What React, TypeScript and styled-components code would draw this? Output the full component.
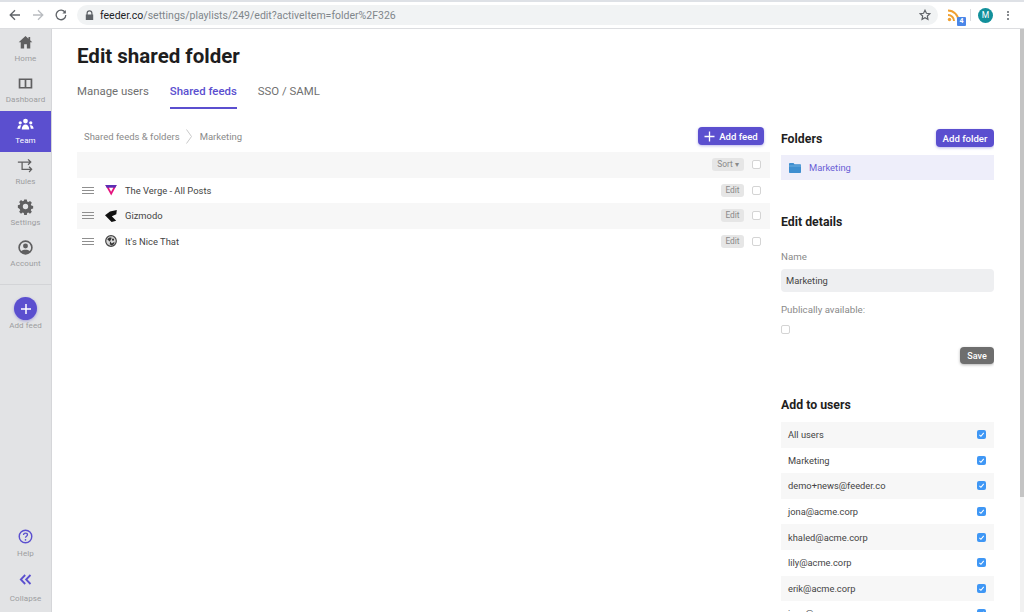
import React from "react";
import styled, { createGlobalStyle } from "styled-components";

const Global = createGlobalStyle`
  html, body { margin: 0; padding: 0; height: 100%; overflow: hidden; background: #fff; }
  #root { height: 100%; }
  * { box-sizing: border-box; }
`;

const FONT = `"Roboto", "Noto Sans", sans-serif`;
const PURPLE = "#5b4fcf";

const Page = styled.div`
  width: 1024px; height: 612px; display: flex; flex-direction: column; overflow: hidden;
  font-family: ${FONT}; color: #333;
`;
const TabStrip = styled.div`
  height: 2px; flex: none; background: #dee1e6;
`;
const Toolbar = styled.div`
  height: 27px; flex: none; display: flex; align-items: center; background: #fff;
  border-bottom: 1px solid #dcdde0; padding: 0 0 0 9px;
`;
const NavIcons = styled.div`
  display: flex; align-items: center; gap: 11px; width: 68px; flex: none;
`;
const AddressBar = styled.div`
  width: 861px; height: 20px; flex: none; border-radius: 10px; background: #f1f3f4;
  display: flex; align-items: center; padding: 0 7px 0 8px; font: 10.5px "Roboto", sans-serif; color: #80868b;
  svg { flex: none; }
`;
const Url = styled.span`
  margin-left: 6px; flex: 1; white-space: nowrap;
  b { font-weight: 400; color: #202124; }
`;
const ExtArea = styled.div`
  display: flex; align-items: center; flex: 1; padding-left: 9px;
`;
const RssWrap = styled.div`
  position: relative; width: 14px; height: 16px; margin-top: -1px;
`;
const RssBadge = styled.span`
  position: absolute; right: -5px; bottom: -3px; width: 9px; height: 9px; background: #4a86e8; color: #fff;
  font: 700 7px/9px "Roboto", sans-serif; text-align: center; border-radius: 1px;
`;
const Sep = styled.span`
  width: 1px; height: 12px; background: #dadce0; margin-left: 9px;
`;
const Avatar = styled.span`
  width: 15px; height: 15px; border-radius: 50%; background: #12909b; color: #fff; margin-left: 7px;
  font: 400 8.5px/15px "Roboto", sans-serif; text-align: center;
`;
const Dots = styled.span`
  margin-left: 14px; display: flex; flex-direction: column; gap: 1.5px;
  i { width: 2px; height: 2px; border-radius: 50%; background: #5f6368; display: block; }
`;

const Body = styled.div`
  flex: 1; min-height: 0; display: flex;
`;
const Sidebar = styled.nav`
  width: 52px; flex: none; background: #e2e3e5; border-right: 1px solid #d5d6d9; display: flex; flex-direction: column;
  padding-bottom: 7px;
`;
const NavItem = styled.div<{ $active?: boolean }>`
  height: 41px; flex: none; display: flex; flex-direction: column; align-items: center; justify-content: flex-start;
  padding-top: 5px; gap: 2px;
  background: ${(p) => (p.$active ? PURPLE : "transparent")};
  color: ${(p) => (p.$active ? "#fff" : "#5f5f60")};
  svg { display: block; flex: none; }
`;
const NavLabel = styled.span<{ $active?: boolean }>`
  font-size: 8px; line-height: 12px; white-space: nowrap;
  color: ${(p) => (p.$active ? "#fff" : "#9c9d9f")}; letter-spacing: 0.1px;
`;
const Divider = styled.div`
  height: 1px; background: #d3d4d7; margin-top: 9px; flex: none;
`;
const AddFeedNav = styled.div`
  display: flex; flex-direction: column; align-items: center; padding-top: 12px;
`;
const AddCircle = styled.span`
  width: 23px; height: 23px; border-radius: 50%; background: ${PURPLE}; display: flex; align-items: center; justify-content: center;
  box-shadow: 0 1px 3px rgba(91,79,207,0.45);
`;
const Spacer = styled.div`flex: 1;`;
const BottomItem = styled.div<{ $gap: number }>`
  display: flex; flex-direction: column; align-items: center; gap: ${(p) => p.$gap}px;
  svg { display: block; flex: none; }
`;
const BottomGroup = styled.div`
  display: flex; flex-direction: column; gap: 13px;
`;

const Main = styled.main`
  flex: 1; min-width: 0; padding: 15px 0 0 25px; background: #fff; height: 100%; overflow: hidden;
`;
const Title = styled.h1`
  margin: 0; font-size: 20.5px; line-height: 24px; font-weight: 700; color: #1e1e1e;
`;
const Tabs = styled.div`
  display: flex; gap: 21px; margin-top: 4px; height: 37px;
`;
const Tab = styled.div<{ $active?: boolean }>`
  font-size: 11.4px; line-height: 18px; padding-top: 10px; height: 37px; font-weight: ${(p) => (p.$active ? 500 : 400)};
  color: ${(p) => (p.$active ? PURPLE : "#6f6f6f")};
  border-bottom: ${(p) => (p.$active ? `2px solid ${PURPLE}` : "2px solid transparent")};
`;
const Columns = styled.div`
  display: flex; margin-top: 18px; align-items: flex-start;
`;
const LeftCol = styled.section`
  width: 693px; flex: none;
`;
const RightCol = styled.aside`
  width: 213px; flex: none; margin-left: 11px;
`;
const CrumbRow = styled.div`
  height: 25px; display: flex; align-items: center; padding: 0 6px 7px 7px; justify-content: space-between;
`;
const Crumbs = styled.div`
  display: flex; align-items: center; font-size: 9.5px; color: #8a8a8a;
  svg { margin: 0 8px 0 6px; }
`;
const PrimaryBtn = styled.button<{ $w: number }>`
  border: 0; background: ${PURPLE}; color: #fff; font: 500 9.6px ${FONT}; border-radius: 4px; height: 18px; padding: 0;
  width: ${(p) => p.$w}px; justify-content: center;
  display: flex; align-items: center; gap: 4px; box-shadow: 0 1px 3px rgba(91,79,207,0.4); white-space: nowrap;
`;
const Row = styled.div<{ $shade?: boolean }>`
  height: 25.5px; display: flex; align-items: center; background: ${(p) => (p.$shade ? "#f7f7f7" : "#fff")};
  padding: 0 9px 0 5px; font-size: 9.4px; color: #444;
`;
const Drag = styled.span`
  width: 12px; display: flex; flex-direction: column; gap: 2px; flex: none;
  i { display: block; height: 1px; background: #8f8f8f; }
`;
const Logo = styled.span`
  width: 12px; height: 12px; margin: 0 8px 0 11px; flex: none; display: block;
  svg { display: block; }
`;
const RowName = styled.span`flex: 1; white-space: nowrap;`;
const SmallBtn = styled.span<{ $wide?: boolean }>`
  background: #e6e6e6; color: #8a8a8a; border-radius: 3px; height: 13px; font-size: 8.4px; line-height: 13px;
  width: ${(p) => (p.$wide ? "32px" : "23px")}; text-align: center; flex: none; white-space: nowrap;
`;
const Check = styled.span<{ $on?: boolean }>`
  width: 9px; height: 9px; border-radius: 2px; flex: none; display: flex; align-items: center; justify-content: center;
  background: ${(p) => (p.$on ? "#3f97f5" : "#fff")};
  border: ${(p) => (p.$on ? "0" : "1px solid #d4d4d4")};
`;
const CheckSlot = styled.span`
  margin-left: 8px; display: flex; flex: none;
`;
const PublicCheck = styled.div`
  margin-top: 8px; display: flex;
`;
const Heading = styled.h2<{ $mt?: number; $mb?: number }>`
  margin: ${(p) => p.$mt ?? 0}px 0 ${(p) => p.$mb ?? 0}px; font-size: 12.3px; line-height: 18px; font-weight: 700; color: #1f1f1f;
`;
const HeadRow = styled.div`
  height: 28px; display: flex; align-items: center; justify-content: space-between; padding: 2px 0 8px;
`;
const FolderRow = styled.div`
  height: 25px; background: #eeeefa; display: flex; align-items: center; padding-left: 8px; gap: 8px;
  font-size: 9.4px; color: #6a5fd6;
`;
const FieldLabel = styled.div<{ $mt: number }>`
  font-size: 9.7px; line-height: 14px; color: #8a8a8a; margin-top: ${(p) => p.$mt}px;
`;
const Input = styled.div`
  height: 23px; border-radius: 4px; background: #eeeff1; font-size: 9.4px; line-height: 23px; padding-left: 5px; color: #444; margin-top: 5px;
`;
const SaveRow = styled.div`
  display: flex; justify-content: flex-end; margin-top: 13px;
`;
const SaveBtn = styled.button`
  border: 0; width: 34px; height: 17px; background: #6e6e6e; color: #fff; font: 500 9px ${FONT}; padding: 0; border-radius: 4px;
  box-shadow: 0 1px 3px rgba(0,0,0,0.3);
`;
const UserRow = styled.div<{ $shade?: boolean }>`
  height: 25.6px; display: flex; align-items: center; justify-content: space-between; padding: 0 8px 0 7px;
  background: ${(p) => (p.$shade ? "#f7f7f7" : "#fff")}; font-size: 9.3px; color: #444; flex: none;
`;
const Scrollbar = styled.div`
  width: 4px; flex: none; background: #f1f1f1; margin-left: 26px; height: 100%;
`;
const Thumb = styled.div`
  height: 468px; background: #c4c4c4;
`;

const Tick = () => (
  <svg width="7" height="7" viewBox="0 0 10 10" fill="none" stroke="#fff" strokeWidth="1.5"><path d="M2 5.4l2.2 2.2L8.2 2.6" /></svg>
);

const NAV = [
  { label: "Home", icon: <path d="M10 2.4 2 9.6h2.4V17h4v-5h3.2v5h4V9.6H18l-2.5-2.3V3.5h-2v2z" fill="currentColor" /> },
  { label: "Dashboard", icon: <path fillRule="evenodd" d="M2 4h16v12H2zM4 6v8h5V6zm7 0v8h5V6z" fill="currentColor" /> },
];
const NAV2 = [
  { label: "Rules", icon: <g fill="none" stroke="currentColor" strokeWidth="1.5"><path d="M1 6h14.5M13 2.8 16.2 6 13 9.2M6 6v8.500h11M14.200 11.400l3 3.100-3 3.100" /></g> },
  { label: "Settings", icon: <path fillRule="evenodd" fill="currentColor" d="m8.3 1.5h3.4l.5 2.5 1.5.7 2.2-1.4 2.4 2.4-1.4 2.2.7 1.5 2.4.5v3.4l-2.4.5-.7 1.5 1.4 2.2-2.4 2.4-2.2-1.4-1.500.7-.5 2.4H8.300l-.5-2.400-1.500-.7-2.200 1.400-2.400-2.400 1.400-2.200-.7-1.500L0 12.200V8.800l2.400-.5.7-1.500-1.400-2.200L4.100 2.200l2.200 1.400 1.500-.7zM10 7a3.500 3.500 0 1 0 0 7 3.500 3.500 0 0 0 0-7z" transform="translate(1 .5) scale(.9)" /> },
  { label: "Account", icon: <g><path fillRule="evenodd" fill="currentColor" d="M10 1.500a8.500 8.500 0 1 0 0 17 8.500 8.500 0 0 0 0-17zm0 2a6.500 6.500 0 0 1 5 10.600c-1.200-1-3-1.600-5-1.600s-3.800.6-5 1.600A6.500 6.500 0 0 1 10 3.500z" /><circle cx="10" cy="8.300" r="2.900" fill="currentColor" /></g> },
];

const USERS = ["All users", "Marketing", "demo+news@feeder.co", "jona@acme.corp", "khaled@acme.corp", "lily@acme.corp", "erik@acme.corp", "jane@acme.corp"];

const TeamIcon = () => (
  <svg width="17" height="17" viewBox="0 0 20 20" fill="#fff">
    <circle cx="10" cy="6" r="2.8" /><circle cx="3.8" cy="8" r="1.9" /><circle cx="16.2" cy="8" r="1.9" />
    <path d="M5.600 16c0-3.600 1.800-6 4.400-6s4.400 2.400 4.400 6zM.5 15c0-2.400 1.200-4.200 3.200-4.200.5 0 1 .1 1.300.3-.8 1-1.100 2.300-1.200 3.900zM19.500 15c0-2.400-1.200-4.200-3.200-4.200-.5 0-1 .1-1.300.3.8 1 1.100 2.300 1.200 3.900z" />
  </svg>
);

const Verge = () => (
  <svg width="12" height="12" viewBox="0 0 12 12">
    <path d="M.3 1h11.400L6.200 11.500z" fill="#e5127d" />
    <path d="M.3 1h11.400l-1.500 2.700H1.700z" fill="#5b2fb5" />
    <path d="M3.900 3.700h4.400L6.100 7.800z" fill="#fff" />
  </svg>
);
const Giz = () => (
  <svg width="12" height="12" viewBox="0 0 12 12">
    <path d="M11.800 0 5 1.500 0 5.200l6.600 6.800 4.600-1.200L6.800 6.300l4.500-2.100z" fill="#111" />
  </svg>
);
const Nice = () => (
  <svg width="12" height="12" viewBox="0 0 12 12">
    <circle cx="6" cy="6" r="5.300" fill="#d8d8d8" stroke="#444" strokeWidth="1.200" />
    <path d="M2.300 4.500c1.400-1.800 3.400-2.400 4.400-1.400L5 6.200l1.800 2.200 2.700-1.600-.4 2.300-2.400 1.400-2-1.300.4-2.400z" fill="#333" />
    <circle cx="8" cy="4.700" r="1.100" fill="#333" />
  </svg>
);

export default function App() {
  return (
    <Page>
      <Global />
      <TabStrip />
      <Toolbar>
        <NavIcons>
          <svg width="12" height="12" viewBox="0 0 12 12" fill="none" stroke="#5f6368" strokeWidth="1.3"><path d="M11 6H1.500M6 1.200 1.200 6 6 10.800" /></svg>
          <svg width="12" height="12" viewBox="0 0 12 12" fill="none" stroke="#b9bcc0" strokeWidth="1.3"><path d="M1 6h9.500M6 1.200 10.800 6 6 10.800" /></svg>
          <svg width="12" height="12" viewBox="0 0 12 12" fill="none" stroke="#5f6368" strokeWidth="1.3"><path d="M10.200 3.600A4.800 4.800 0 1 0 10.800 6" /><path d="M10.800 1v3.400H7.400" fill="#5f6368" stroke="none" /></svg>
        </NavIcons>
        <AddressBar>
          <svg width="9" height="11" viewBox="0 0 9 11" fill="#5f6368"><path fillRule="evenodd" d="M1.500 4.500V3.200a3 3 0 0 1 6 0v1.300h.7v5.600H.8V4.500zm1.200 0h3.600V3.200a1.800 1.800 0 0 0-3.600 0z" /></svg>
          <Url><b>feeder.co</b>/settings/playlists/249/edit?activeItem=folder%2F326</Url>
          <svg width="12" height="12" viewBox="0 0 24 24" fill="none" stroke="#5f6368" strokeWidth="2.400"><path d="m12 2.500 2.900 6.100 6.600.9-4.800 4.600 1.200 6.600L12 17.500l-5.900 3.200 1.200-6.600L2.500 9.500l6.600-.9z" /></svg>
        </AddressBar>
        <ExtArea>
          <RssWrap>
            <svg width="13" height="13" viewBox="0 0 13 13" fill="none" stroke="#f0a030" strokeWidth="2"><path d="M1 1.500c5.700 0 10.500 4.800 10.500 10.500M1 6c3.300 0 6 2.700 6 6" /><circle cx="2.500" cy="10.500" r="1.700" fill="#f0a030" stroke="none" /></svg>
            <RssBadge>4</RssBadge>
          </RssWrap>
          <Sep />
          <Avatar>M</Avatar>
          <Dots><i /><i /><i /></Dots>
        </ExtArea>
      </Toolbar>
      <Body>
        <Sidebar>
          {NAV.map((n) => (
            <NavItem key={n.label}>
              <svg width="17" height="17" viewBox="0 0 20 20">{n.icon}</svg>
              <NavLabel>{n.label}</NavLabel>
            </NavItem>
          ))}
          <NavItem $active>
            <TeamIcon />
            <NavLabel $active>Team</NavLabel>
          </NavItem>
          {NAV2.map((n) => (
            <NavItem key={n.label}>
              <svg width="17" height="17" viewBox="0 0 20 20">{n.icon}</svg>
              <NavLabel>{n.label}</NavLabel>
            </NavItem>
          ))}
          <Divider />
          <AddFeedNav>
            <AddCircle>
              <svg width="12" height="12" viewBox="0 0 12 12" stroke="#fff" strokeWidth="1.500"><path d="M6 1v10M1 6h10" /></svg>
            </AddCircle>
            <NavLabel>Add feed</NavLabel>
          </AddFeedNav>
          <Spacer />
          <BottomGroup>
            <BottomItem $gap={4}>
              <svg width="15" height="15" viewBox="0 0 16 16" fill="none"><circle cx="8" cy="8" r="6.700" stroke={PURPLE} strokeWidth="1.500" /><path d="M5.900 6.300C5.900 5 6.900 4.300 8 4.300s2.100.7 2.100 1.900c0 1.500-2.100 1.600-2.100 3.200" stroke={PURPLE} strokeWidth="1.400" /><circle cx="8" cy="11.500" r=".9" fill={PURPLE} /></svg>
              <NavLabel>Help</NavLabel>
            </BottomItem>
            <BottomItem $gap={7}>
              <svg width="13" height="13" viewBox="0 0 13 13" fill="none" stroke={PURPLE} strokeWidth="1.800"><path d="M6.200 2 1.800 6.500 6.200 11M11.500 2 7.100 6.500 11.500 11" /></svg>
              <NavLabel>Collapse</NavLabel>
            </BottomItem>
          </BottomGroup>
        </Sidebar>
        <Main>
          <Title>Edit shared folder</Title>
          <Tabs>
            <Tab>Manage users</Tab>
            <Tab $active>Shared feeds</Tab>
            <Tab>SSO / SAML</Tab>
          </Tabs>
          <Columns>
            <LeftCol>
              <CrumbRow>
                <Crumbs>
                  Shared feeds &amp; folders
                  <svg width="6" height="15" viewBox="0 0 6 15" fill="none" stroke="#c9c9c9"><path d="m.5.500 5 7-5 7" /></svg>
                  Marketing
                </Crumbs>
                <PrimaryBtn $w={66}>
                  <svg width="11" height="11" viewBox="0 0 11 11" stroke="#fff" strokeWidth="1.300"><path d="M5.500.5v10M.5 5.500h10" /></svg>
                  Add feed
                </PrimaryBtn>
              </CrumbRow>
              <Row $shade>
                <RowName />
                <SmallBtn $wide>Sort ▾</SmallBtn>
                <CheckSlot><Check /></CheckSlot>
              </Row>
              <Row>
                <Drag><i /><i /><i /></Drag>
                <Logo><Verge /></Logo>
                <RowName>The Verge - All Posts</RowName>
                <SmallBtn>Edit</SmallBtn>
                <CheckSlot><Check /></CheckSlot>
              </Row>
              <Row $shade>
                <Drag><i /><i /><i /></Drag>
                <Logo><Giz /></Logo>
                <RowName>Gizmodo</RowName>
                <SmallBtn>Edit</SmallBtn>
                <CheckSlot><Check /></CheckSlot>
              </Row>
              <Row>
                <Drag><i /><i /><i /></Drag>
                <Logo><Nice /></Logo>
                <RowName>It's Nice That</RowName>
                <SmallBtn>Edit</SmallBtn>
                <CheckSlot><Check /></CheckSlot>
              </Row>
            </LeftCol>
            <RightCol>
              <HeadRow>
                <Heading $mt={2}>Folders</Heading>
                <PrimaryBtn $w={58}>Add folder</PrimaryBtn>
              </HeadRow>
              <FolderRow>
                <svg width="12" height="10" viewBox="0 0 12 10"><path d="M0 1.200C0 .5.500 0 1 0h3.500l1 1.300H11c.6 0 1 .4 1 1V9c0 .6-.4 1-1 1H1c-.6 0-1-.4-1-1z" fill="#3f8fd0" /><path d="M0 3h12" stroke="#8dc2ea" strokeWidth=".6" /></svg>
                Marketing
              </FolderRow>
              <Heading $mt={33}>Edit details</Heading>
              <FieldLabel $mt={19}>Name</FieldLabel>
              <Input>Marketing</Input>
              <FieldLabel $mt={11}>Publically available:</FieldLabel>
              <PublicCheck><Check /></PublicCheck>
              <SaveRow><SaveBtn>Save</SaveBtn></SaveRow>
              <Heading $mt={32} $mb={8}>Add to users</Heading>
              {USERS.map((u, i) => (
                <UserRow key={u} $shade={i % 2 === 0}>
                  {u}
                  <Check $on><Tick /></Check>
                </UserRow>
              ))}
            </RightCol>
          </Columns>
        </Main>
        <Scrollbar><Thumb /></Scrollbar>
      </Body>
    </Page>
  );
}
